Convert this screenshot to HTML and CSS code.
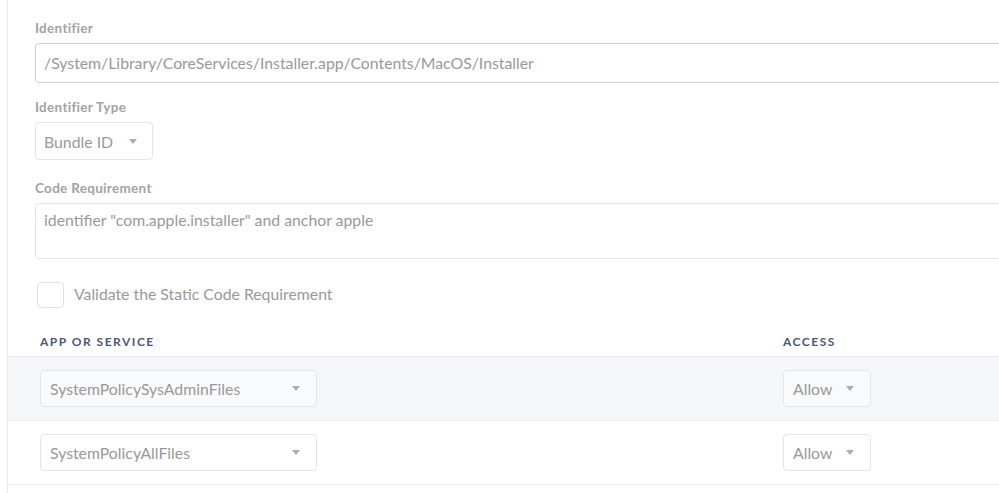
FILE: index.html
```html
<!DOCTYPE html>
<html lang="en">

<head>
    <meta charset="UTF-8">
    <title>Privacy Preferences</title>
    <link rel="stylesheet" href="styles.css">
</head>

<body>

    <div class="panel">

        <div class="form">
            <div class="field">
                <label class="field-label">Identifier</label>
                <div class="text-input">/System/Library/CoreServices/Installer.app/Contents/MacOS/Installer</div>
            </div>

            <div class="field field-type">
                <label class="field-label">Identifier Type</label>
                <div class="select select-small">
                    <span>Bundle ID</span>
                    <span class="caret"></span>
                </div>
            </div>

            <div class="field">
                <label class="field-label">Code Requirement</label>
                <div class="text-area">identifier "com.apple.installer" and anchor apple</div>
            </div>

            <div class="check">
                <span class="check-box"></span>
                <span class="check-label">Validate the Static Code Requirement</span>
            </div>
        </div>

        <table class="services">
            <thead>
                <tr>
                    <th class="col-app">App or Service</th>
                    <th>Access</th>
                </tr>
            </thead>
            <tbody>
                <tr class="row-alt">
                    <td>
                        <div class="select select-app">
                            <span>SystemPolicySysAdminFiles</span>
                            <span class="caret"></span>
                        </div>
                    </td>
                    <td>
                        <div class="select select-access">
                            <span>Allow</span>
                            <span class="caret"></span>
                        </div>
                    </td>
                </tr>
                <tr>
                    <td>
                        <div class="select select-app">
                            <span>SystemPolicyAllFiles</span>
                            <span class="caret"></span>
                        </div>
                    </td>
                    <td>
                        <div class="select select-access">
                            <span>Allow</span>
                            <span class="caret"></span>
                        </div>
                    </td>
                </tr>
            </tbody>
        </table>

    </div>

</body>

</html>
```

FILE: styles.css
```css
* {
    box-sizing: border-box;
    font-family: 'Lato', 'Open Sans', Arial, sans-serif;
}

html,
body {
    margin: 0;
    padding: 0;
    background: #fff;
    overflow: hidden;
}

.panel {
    width: 1080px;
    margin-left: 7px;
    border-left: 1px solid #ececec;
    min-height: 493px;
}

.form {
    padding: 20px 0 0 27px;
}

.field {
    margin-bottom: 16px;
}

.field-type {
    margin-bottom: 20px;
}

.field-label {
    display: block;
    font-size: 13.5px;
    line-height: 16px;
    font-weight: 700;
    color: #a3a3a3;
    margin-bottom: 7px;
    letter-spacing: 0.3px;
}

.text-input {
    height: 40px;
    border: 1px solid #cfcfcf;
    border-radius: 4px;
    padding: 0 8px;
    font-size: 15.8px;
    line-height: 38px;
    color: #999;
}

.text-area {
    height: 56px;
    border: 1px solid #e6e6e6;
    border-radius: 4px;
    padding: 6px 8px;
    font-size: 15.8px;
    line-height: 20px;
    color: #999;
}

.select {
    display: flex;
    align-items: center;
    justify-content: space-between;
    border: 1px solid #e6e6e6;
    border-radius: 4px;
    background: #fff;
    font-size: 15.8px;
    color: #999;
}

.select-small {
    width: 118px;
    height: 38px;
    padding: 0 15px 0 8px;
}

.caret {
    width: 0;
    height: 0;
    border-left: 4px solid transparent;
    border-right: 4px solid transparent;
    border-top: 5px solid #a9adb6;
}

.check {
    display: flex;
    align-items: center;
    gap: 10px;
    margin: 23px 0 0 2px;
    height: 26px;
}

.check-box {
    width: 27px;
    height: 26px;
    border: 1px solid #e2e2e2;
    border-radius: 4px;
}

.check-label {
    font-size: 15.8px;
    line-height: 20px;
    color: #999;
    margin-top: -3px;
}

.services {
    width: 100%;
    border-collapse: collapse;
    margin-top: 26px;
}

.services th {
    text-align: left;
    font-size: 12px;
    font-weight: 700;
    text-transform: uppercase;
    letter-spacing: 1.5px;
    color: #4b5875;
    padding: 0 32px 7px;
    border-bottom: 1px solid #eaecef;
}

.services .col-app {
    width: 743px;
}

.services td {
    padding: 13px 0 13px 32px;
    border-bottom: 1px solid #eaecef;
}

.row-alt td {
    background: #f5f6f9;
}

.row-alt .select {
    background: #f9fafb;
}

.select-app {
    width: 277px;
    height: 37px;
    padding: 0 16px 0 9px;
}

.select-access {
    width: 88px;
    height: 37px;
    padding: 0 16px 0 9px;
}
```
